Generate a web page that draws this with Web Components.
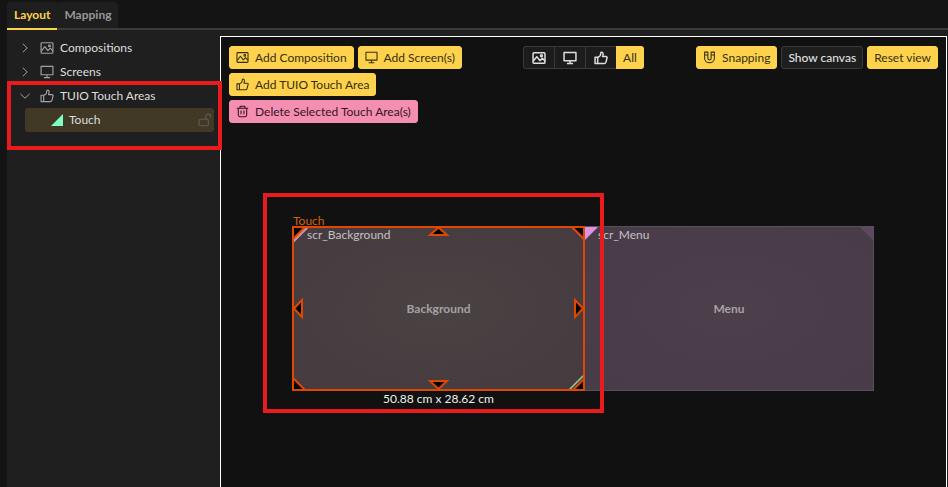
<!DOCTYPE html>
<html lang="en">
<head>
<meta charset="utf-8">
<title>Layout</title>
<style>
html, body { height: 100%; margin: 0; }
body { background: #141414; color: #d6d6d6; font: 12px/16px Lato, "Noto Sans", sans-serif; overflow: hidden; }
</style>
</head>
<body>
<layout-app></layout-app>
<script>
const ICONS = {
  image: '<rect x="1.2" y="2" width="13.6" height="12" rx="1"/><path d="M1.5 11.5 5.5 6.5 9 11l2.8-2.8 3 3.3"/><circle cx="10.8" cy="5.4" r="1.1"/>',
  screen: '<path d="M1.2 1.6h13.6v9.6H1.2zM8 11.2v3.2M4.5 14.4h7"/>',
  thumb: '<path d="M1.2 7.2h3v7.2h-3zM4.2 7.6 7 5.4C7.6 4.4 7.4 2.6 8 1.6c1.4-.8 2.4.4 2.4 1.8 0 1-.4 2-.6 3h4c1 0 1.3.8 1.1 1.6l-1.3 5c-.3 1-.8 1.4-1.7 1.4H4.2z"/>',
  trash: '<path d="M1 4h14M5 4V1.6h6V4M2.8 4v8.4c0 1.4.6 2 2 2h6.4c1.4 0 2-.6 2-2V4M6.2 6.8v4.6M9.8 6.8v4.6"/>',
  magnet: '<path d="M2 1.4h4v7.4c0 2.8 4 2.8 4 0V1.4h4v7.4c0 7.6-12 7.6-12 0zM2 5h4M10 5h4"/>',
  unlock: '<rect x="1.2" y="7.2" width="10.6" height="7.4" rx="1.4"/><path d="M9 7V3.6c0-3 5.4-3 5.4 0v1.6"/>',
  right: '<path d="m5 2.2 6 5.8-6 5.8"/>',
  down: '<path d="M1.8 5 8 11l6.2-6"/>'
};

const define = (name, html, setup) => {
  const template = document.createElement('template');
  template.innerHTML = html;
  customElements.define(name, class extends HTMLElement {
    constructor() {
      super();
      this.attachShadow({ mode: 'open' }).append(template.content.cloneNode(true));
    }
    connectedCallback() { if (setup) setup(this, this.shadowRoot); }
  });
};

const makeIcon = (name, className = '') => {
  const icon = document.createElement('ui-icon');
  icon.setAttribute('name', name);
  icon.className = className;
  return icon;
};

define('ui-icon', `<style>
  :host { display: block; width: 14px; height: 14px; flex: none; }
  svg { display: block; width: 100%; height: 100%; fill: none; stroke: currentColor; stroke-width: var(--icon-stroke, 1.3); stroke-linejoin: round; }
</style><svg viewBox="0 0 16 16" aria-hidden="true"></svg>`,
  (el, root) => { root.querySelector('svg').innerHTML = ICONS[el.getAttribute('name')]; });

define('ui-button', `<style>
  :host { display: block; }
  button { display: flex; align-items: center; gap: 6px; height: 23px; padding: 0 6px; border: 1px solid #ffd24d; border-radius: 3px; background: #ffd24d; color: #34300f; font: inherit; white-space: nowrap; }
  ui-icon { width: 13px; height: 13px; }
  :host([tone=danger]) button { background: #f48fb1; border-color: #f48fb1; color: #38131f; }
  :host([tone=dark]) button { background: #1e1e1e; border-color: #393939; color: #e0e0e0; font-weight: 500; }
</style><button type="button"><slot></slot></button>`,
  (el, root) => {
    if (el.hasAttribute('icon')) root.querySelector('button').prepend(makeIcon(el.getAttribute('icon')));
  });

define('view-filter', `<style>
  :host { display: flex; height: 23px; }
  button { width: 31px; padding: 0; border: 1px solid #393939; border-right: 0; background: #1c1c1c; color: #dedede; font: inherit; display: flex; align-items: center; justify-content: center; }
  button:first-child, button:first-of-type { border-radius: 3px 0 0 3px; }
  button:last-child { width: 28px; border: 0; border-radius: 0 3px 3px 0; background: #ffd24d; color: #34300f; }
  ui-icon { --icon-stroke: 1.7; }
</style>
<button type="button" aria-label="Compositions"><ui-icon name="image"></ui-icon></button>
<button type="button" aria-label="Screens"><ui-icon name="screen"></ui-icon></button>
<button type="button" aria-label="Touch areas"><ui-icon name="thumb"></ui-icon></button>
<button type="button" aria-pressed="true">All</button>`);

define('tab-bar', `<style>
  :host { display: flex; padding-top: 2px; border-bottom: 2px solid #3a3a3a; height: 26px; }
  button { height: 28px; padding: 0 7px; border: 0; border-bottom: 2px solid #3a3a3a; border-radius: 4px 4px 0 0; background: #1e1e1e; color: #979797; font: inherit; font-weight: 700; }
  [aria-selected=true] { color: #ffd24d; border-color: #ffd24d; border-radius: 4px 0 0 0; }
</style>
<button type="button" role="tab" aria-selected="true">Layout</button>
<button type="button" role="tab" aria-selected="false">Mapping</button>`);

define('tree-row', `<style>
  :host { display: block; }
  button { display: flex; align-items: center; width: 100%; height: 24px; padding: 0 0 0 12px; border: 0; background: none; color: #dedede; font: inherit; text-align: left; }
  ui-icon { color: #a3a3a3; }
  .chev { width: 12px; height: 12px; margin-right: 9px; }
  .kind { margin-right: 6px; }
</style><button type="button"><slot></slot></button>`,
  (el, root) => {
    root.querySelector('button').prepend(
      makeIcon(el.hasAttribute('open') ? 'down' : 'right', 'chev'),
      makeIcon(el.getAttribute('icon'), 'kind'));
  });

define('tree-item', `<style>
  :host { display: flex; align-items: center; height: 24px; margin: 0 6px 0 18px; padding: 0 2px 0 26px; box-sizing: border-box; border-radius: 3px; background: #413926; color: #dedede; }
  .mark { width: 12px; height: 12px; margin-right: 6px; background: #7fffc4; clip-path: polygon(100% 0, 100% 100%, 0 100%); }
  .name { flex: 1; }
  button { padding: 0; border: 0; background: none; color: #5c5c55; }
</style><span class="mark"></span><span class="name"><slot></slot></span><button type="button" aria-label="Lock"><ui-icon name="unlock"></ui-icon></button>`);

define('canvas-toolbar', `<style>
  :host { display: grid; grid-template-columns: 1fr auto 1fr; padding: 9px 8px; align-items: start; }
  .group { display: flex; flex-wrap: wrap; gap: 4px; }
  .end { justify-content: flex-end; }
</style>
<div class="group">
  <ui-button icon="image">Add Composition</ui-button>
  <ui-button icon="screen">Add Screen(s)</ui-button>
  <ui-button icon="thumb">Add TUIO Touch Area</ui-button>
  <ui-button icon="trash" tone="danger">Delete Selected Touch Area(s)</ui-button>
</div>
<view-filter></view-filter>
<div class="group end">
  <ui-button icon="magnet">Snapping</ui-button>
  <ui-button tone="dark">Show canvas</ui-button>
  <ui-button>Reset view</ui-button>
</div>`);

define('screen-node', `<style>
  :host { display: grid; place-items: center; box-sizing: border-box; border: 1px solid #57525a; background: radial-gradient(ellipse, #4d3f4b, #483c48); color: #a5a2a6; font-weight: 700; }
  .name { position: absolute; top: 0; left: 13px; color: #c4c0c5; font-weight: 400; }
  .in, .out { position: absolute; top: 0; width: 13px; height: 13px; }
  .in { left: 0; background: #df91e4; clip-path: polygon(0 0, 100% 0, 0 100%); }
  .out { right: 0; background: #5e485f; clip-path: polygon(0 0, 100% 0, 100% 100%); }
</style><span class="in"></span><span class="out"></span><span class="name"></span><slot></slot>`,
  (el, root) => { root.querySelector('.name').textContent = el.getAttribute('label'); });

define('touch-area', `<style>
  :host { display: block; color: #d4600a; }
  svg { position: absolute; inset: 0; width: 100%; height: 100%; fill: #000; stroke: #de4800; stroke-width: 2; }
  .name { position: absolute; top: -12px; left: 1px; line-height: 14px; }
  .size { position: absolute; top: 100%; left: 0; width: 100%; text-align: center; color: #f0f0f0; }
</style>
<span class="name">Touch</span>
<svg viewBox="0 0 293 165" aria-hidden="true">
  <path d="M1 16 16 1" stroke="#d08f9c"/>
  <path d="M276 165 293 148" stroke="#8fd6a3" stroke-width="1.5"/>
  <path d="M1 1h12L1 13zM280 1h12v12zM1 152v12h12zM292 153v11h-11z"/>
  <path d="M146.500 1.500 155 9h-17zM146.500 163 155 155h-17zM2 82.500 10 74v17zM291 82.500 283 74v17z"/>
  <path d="M1 1h291v163H1z" fill="none"/>
</svg>
<span class="size">50.88 cm x 28.62 cm</span>`);

define('stage-canvas', `<style>
  :host { display: block; position: relative; isolation: isolate; overflow: hidden; box-sizing: border-box; border: 1px solid #fff; border-bottom: 0; background: #111; }
  .scene { position: absolute; inset: 0; z-index: 0; }
  .scene > * { position: absolute; }
  canvas-toolbar { position: relative; z-index: 1; }
  .a { left: 72px; top: 189px; width: 291px; height: 165px; background: radial-gradient(ellipse, #4b4243, #453b40); }
  .b { left: 363px; top: 189px; width: 290px; height: 165px; }
  .c { left: 71px; top: 189px; width: 293px; height: 165px; }
</style>
<canvas-toolbar></canvas-toolbar>
<div class="scene">
  <screen-node class="a" label="scr_Background">Background</screen-node>
  <screen-node class="b" label="scr_Menu">Menu</screen-node>
  <touch-area class="c"></touch-area>
</div>`);

define('layout-app', `<style>
  :host { display: flex; flex-direction: column; height: 100vh; padding-left: 7px; box-sizing: border-box; }
  main { flex: 1; display: grid; grid-template-columns: 213px 1fr; background: #1f1f1f; }
  nav { padding-top: 6px; }
  stage-canvas { margin: 6px 1px 0 0; }
  .mark { position: absolute; box-sizing: border-box; border: 4px solid #e81c1c; pointer-events: none; z-index: 2; }
  .tree { left: 7px; top: 81px; width: 215px; height: 69px; }
  .area { left: 263px; top: 193px; width: 341px; height: 220px; }
</style>
<tab-bar role="tablist"></tab-bar>
<main>
  <nav>
    <tree-row icon="image">Compositions</tree-row>
    <tree-row icon="screen">Screens</tree-row>
    <tree-row icon="thumb" open>TUIO Touch Areas</tree-row>
    <tree-item>Touch</tree-item>
  </nav>
  <stage-canvas></stage-canvas>
</main>
<div class="mark tree"></div>
<div class="mark area"></div>`);
</script>
</body>
</html>
